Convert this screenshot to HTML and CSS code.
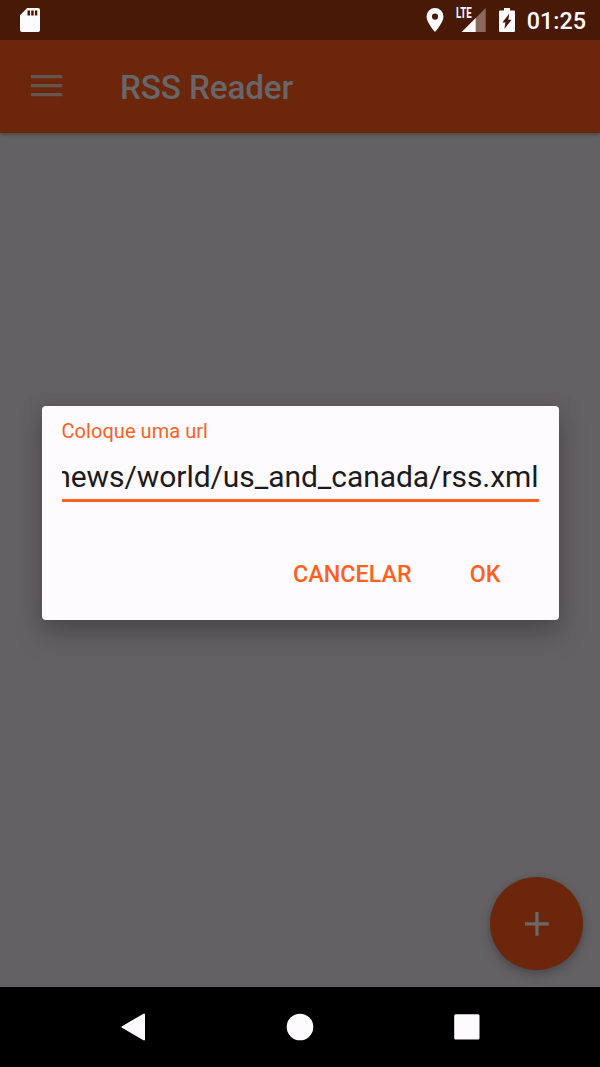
FILE: index.html
```html
<!DOCTYPE html>
<html lang="pt-BR">
<head>
<meta charset="utf-8">
<title>RSS Reader</title>
<link rel="stylesheet" href="styles.css">
</head>
<body>
<div class="screen">
  <header class="status">
    <svg class="sd" width="20" height="24" viewBox="0 0 20 24"><path fill="#fdfbfe" fill-rule="evenodd" d="M7.200 0H18a2 2 0 0 1 2 2V22a2 2 0 0 1-2 2H2a2 2 0 0 1-2-2V7.200zM7.500 2.400V7.500H10V2.400zM11.200 2.400V7.500H13.700V2.400zM14.900 2.400V7.500H17.300V2.400z"/></svg>
    <svg class="pin" width="18" height="24" viewBox="0 0 18 24"><path fill="#fdfbfe" fill-rule="evenodd" d="M9 0A8.500 8.500 0 0 0 .5 8.500C.5 14.500 9 24 9 24S17.500 14.500 17.500 8.500A8.500 8.500 0 0 0 9 0zM9 5.500a3.100 3.100 0 1 1 0 6.200a3.100 3.100 0 0 1 0-6.200z"/></svg>
    <div class="signal">
      <svg width="30" height="25" viewBox="0 0 30 25"><path fill="#8b6a5e" d="M29.700 0V24H19V10.700z"/><path fill="#fdfbfe" d="M19.700 10V24H5.700z"/></svg>
      <span class="lte">LTE</span>
    </div>
    <svg class="battery" width="16" height="24" viewBox="0 0 16 24"><path fill="#fdfbfe" fill-rule="evenodd" d="M5 0H11V2.400H14.800Q16 2.400 16 3.600V22.800Q16 24 14.800 24H1.200Q0 24 0 22.800V3.600Q0 2.400 1.200 2.400H5zM10.300 5.600L3.400 14.600H6.400L5.400 21L12.600 11.800H9.300z"/></svg>
    <span class="clock">01:25</span>
  </header>
  <div class="appbar">
    <svg class="menu" width="32" height="22" viewBox="0 0 32 22"><path fill="#66544f" d="M0 0H31.300V3.300H0zM0 9H31.300V12.300H0zM0 18H31.300V21.300H0z"/></svg>
    <h1 class="title">RSS Reader</h1>
  </div>
  <main class="content">
    <div class="fab"><svg width="24" height="24" viewBox="0 0 24 24"><path fill="#6c6867" d="M10.300 0H13.600V10.300H23.700V13.400H13.600V23.700H10.300V13.400H0V10.300H10.300z"/></svg></div>
  </main>
  <nav class="navbar">
    <svg width="26" height="28" viewBox="0 0 26 28"><path fill="#fdfbfe" stroke="#fdfbfe" stroke-width="2" stroke-linejoin="round" d="M2.500 14L24 1.500V26.500z"/></svg>
    <svg width="28" height="28" viewBox="0 0 28 28"><circle cx="14" cy="14" r="13.300" fill="#fdfbfe"/></svg>
    <svg width="26" height="28" viewBox="0 0 26 28"><rect x=".2" y="1.300" width="25.300" height="25.300" rx="1.500" fill="#fdfbfe"/></svg>
  </nav>
</div>
<section class="dialog">
  <label class="label">Coloque uma url</label>
  <div class="field"><span>news/world/us_and_canada/rss.xml</span></div>
  <div class="actions"><span class="action">CANCELAR</span><span class="action">OK</span></div>
</section>
</body>
</html>
```
FILE: styles.css
```css
* { box-sizing: border-box; }
body { margin: 0; font-family: Roboto, "Liberation Sans", sans-serif; overflow: hidden; }
svg { display: block; flex: none; }
.screen { display: flex; flex-direction: column; width: 600px; height: 1067px; background: #646164; }
.status { display: flex; align-items: flex-start; height: 40px; padding: 8px 14px 0 20px; background: #481a06; color: #fdfbfe; }
.pin { margin-left: auto; }
.signal { position: relative; margin-left: 12px; }
.lte { position: absolute; left: 0; top: 0; font-size: 14.5px; line-height: 12px; font-weight: 700; transform: scaleX(.67); transform-origin: 0 0; }
.battery { margin-left: 13px; }
.clock { margin-left: 12px; font-size: 23.33px; line-height: 26px; font-weight: 500; }
.appbar { display: flex; align-items: center; height: 93px; padding-left: 31px; background: #6b260c; box-shadow: 0 2px 3px rgba(55,58,52,.55); z-index: 1; }
.menu { margin-top: -1px; }
.title { margin: 3px 0 0 57px; font-size: 33.33px; line-height: 40px; font-weight: 500; letter-spacing: -.17px; color: #686668; }
.content { flex: 1; display: flex; align-items: flex-end; justify-content: flex-end; padding: 0 17px 17px 0; overflow: hidden; }
.fab { display: flex; align-items: center; justify-content: center; width: 93px; height: 93px; border-radius: 50%; background: #6b260c; box-shadow: 0 5px 10px rgba(50,52,52,.45), 0 0 4px rgba(50,52,52,.2); }
.navbar { display: flex; align-items: center; justify-content: space-between; padding: 0 120px; height: 80px; background: #000; }
.dialog { position: absolute; left: 41.5px; top: 406px; width: 517px; height: 214px; padding: 13px 20px 0; border-radius: 4px; background: #fdfbfe; box-shadow: 0 14px 22px rgba(58,61,60,.55), 0 0 18px rgba(65,62,60,.3); }
.label { display: block; font-size: 20px; line-height: 24px; letter-spacing: .05px; color: #fe601e; }
.field { display: flex; justify-content: flex-end; height: 52px; margin-top: 7px; padding-top: 9px; border-bottom: 3px solid #fe601e; overflow: hidden; white-space: nowrap; font-size: 30px; line-height: 36px; letter-spacing: -.06px; color: #1c1a1d; }
.actions { display: flex; justify-content: flex-end; gap: 58px; padding: 58px 38px 0 0; font-size: 23.33px; line-height: 29px; font-weight: 500; color: #fe601e; }
```
